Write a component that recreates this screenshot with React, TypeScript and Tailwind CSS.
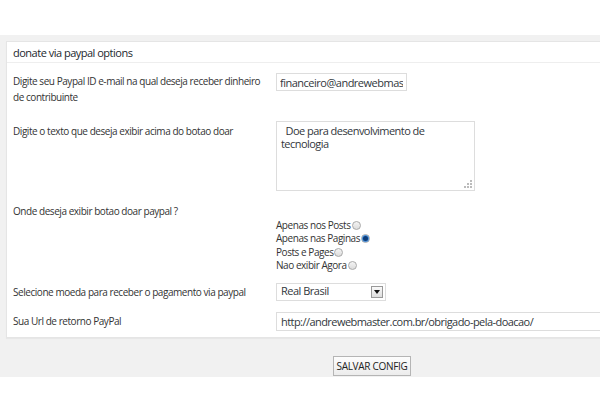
import React from 'react'

const Radio = ({ checked }: { checked?: boolean }): React.ReactElement => (
  <span className="inline-flex items-center justify-center w-[9px] h-[9px] rounded-full border border-[#a9a9a9] bg-gradient-to-b from-[#f4f4f4] to-[#dcdcdc] align-middle -mt-[2px] ml-[1px]">
    {checked && <span className="w-[5px] h-[5px] rounded-full bg-[#0c3c7a] ring-1 ring-[#4b8fd6]" />}
  </span>
)

const options = [
  { label: 'Apenas nos Posts', checked: false },
  { label: 'Apenas nas Paginas', checked: true },
  { label: 'Posts e Pages', checked: false },
  { label: 'Nao exibir Agora', checked: false },
]

const App = (): React.ReactElement => {
  return (
    <div className="w-[600px] h-[400px] bg-white overflow-hidden pt-[35px] font-['Open_Sans',sans-serif] text-[#333]">
      <div className="bg-[#f1f1f1] pt-[6px] pl-[6px] pb-[1px]">
        <div className="bg-white border border-r-0 border-[#e5e5e5] w-[620px] shadow-[0_1px_1px_rgba(0,0,0,0.04)]">
          <div className="h-[21px] border-b border-[#eeeeee] pl-[6px] text-[11px] tracking-[-0.5px] leading-[21px] text-[#23282d]">
            donate via paypal options
          </div>

          <div className="flex pt-[10px]">
            <div className="w-[269px] pl-[6px] pr-[10px] text-[10px] tracking-[-0.45px] leading-[16px]">
              Digite seu Paypal ID e-mail na qual deseja receber dinheiro de contribuinte
            </div>
            <input
              readOnly
              defaultValue="financeiro@andrewebmaster.com.br"
              className="w-[131px] h-[18px] border border-[#dddddd] px-[3px] text-[11px] tracking-[-0.5px] text-[#32373c] outline-none"
            />
          </div>

          <div className="flex mt-[16px]">
            <div className="w-[269px] pl-[6px] pt-[2px] text-[10px] tracking-[-0.45px] leading-[16px]">
              Digite o texto que deseja exibir acima do botao doar
            </div>
            <div className="relative w-[199px] h-[70px] border border-[#dddddd] px-[4px] pt-[2px] text-[11px] tracking-[-0.55px] leading-[13px] text-[#32373c]">
              <div>&nbsp; Doe para desenvolvimento de</div>
              <div>tecnologia</div>
              <svg className="absolute right-[2px] bottom-[2px]" width="8" height="8" viewBox="0 0 8 8">
                <rect x="6" y="0" width="2" height="2" fill="#bbb" />
                <rect x="3" y="3" width="2" height="2" fill="#bbb" />
                <rect x="6" y="3" width="2" height="2" fill="#bbb" />
                <rect x="0" y="6" width="2" height="2" fill="#bbb" />
                <rect x="3" y="6" width="2" height="2" fill="#bbb" />
                <rect x="6" y="6" width="2" height="2" fill="#bbb" />
              </svg>
            </div>
          </div>

          <div className="flex mt-[12px]">
            <div className="w-[269px] pl-[6px] text-[10px] tracking-[-0.45px] leading-[16px]">
              Onde deseja exibir botao doar paypal ?
            </div>
            <div className="pt-[16px] text-[10px] tracking-[-0.45px] leading-[13.4px]">
              {options.map((o) => (
                <div key={o.label}>
                  {o.label}
                  <Radio checked={o.checked} />
                </div>
              ))}
            </div>
          </div>

          <div className="flex mt-[10px]">
            <div className="w-[269px] pl-[6px] text-[10px] tracking-[-0.45px] leading-[18px]">
              Selecione moeda para receber o pagamento via paypal
            </div>
            <div className="flex items-center justify-between w-[110px] h-[18px] border border-[#dddddd] pl-[4px] pr-[2px] text-[11px] tracking-[-0.5px] text-[#32373c]">
              <span>Real Brasil</span>
              <span className="flex items-center justify-center w-[12px] h-[12px] border border-[#999] bg-gradient-to-b from-[#fafafa] to-[#dddddd]">
                <svg width="6" height="4" viewBox="0 0 6 4">
                  <path d="M0 0 L6 0 L3 4 Z" fill="#111" />
                </svg>
              </span>
            </div>
          </div>

          <div className="flex mt-[11px] pb-[6px]">
            <div className="w-[269px] pl-[6px] text-[10px] tracking-[-0.45px] leading-[19px]">
              Sua Url de retorno PayPal
            </div>
            <input
              readOnly
              defaultValue="http://andrewebmaster.com.br/obrigado-pela-doacao/"
              className="w-[340px] h-[19px] border border-[#dddddd] px-[4px] text-[11px] tracking-[-0.55px] text-[#32373c] outline-none"
            />
          </div>
        </div>

        <div className="mt-[14px] ml-[327px]">
          <button className="h-[20px] w-[78px] border border-[#b5b5b5] bg-gradient-to-b from-[#fdfdfd] to-[#ececec] text-[10px] text-[#222] tracking-[-0.3px]">
            SALVAR CONFIG
          </button>
        </div>
      </div>
    </div>
  )
}

export default App
